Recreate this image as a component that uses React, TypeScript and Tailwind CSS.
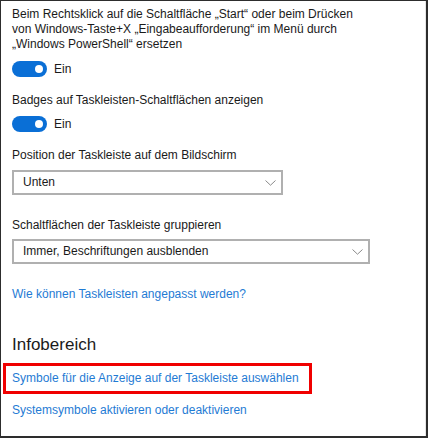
import React from 'react';

const font = { fontFamily: '"Liberation Sans", Arial, sans-serif' };

const Toggle: React.FC<{ label: string; className?: string }> = ({ label, className = '' }) => (
  <div className={`flex items-center h-[16px] ${className}`}>
    <div className="w-[35px] h-[16px] rounded-full bg-[#0a6fd6] flex items-center justify-end pr-[4px]">
      <div className="w-[8px] h-[8px] rounded-full bg-white" />
    </div>
    <span className="ml-[7px] text-[12px] leading-[15px] text-[#1a1a1a]">{label}</span>
  </div>
);

const Select: React.FC<{ value: string; width: string; className?: string }> = ({ value, width, className = '' }) => (
  <div className={`${width} h-[25px] border-2 border-[#b0b0b0] flex items-center justify-between pl-[9px] pr-[5px] ${className}`}>
    <span className="text-[12px] leading-[15px] text-[#1a1a1a]">{value}</span>
    <svg width="11" height="6" viewBox="0 0 11 6" className="shrink-0">
      <path d="M0.5 0.5 L5.5 5.2 L10.5 0.5" fill="none" stroke="#8a8a8a" strokeWidth="1" />
    </svg>
  </div>
);

export default function App() {
  return (
    <div
      className="w-[428px] h-[438px] bg-white border-t border-l border-r-2 border-b-2 border-[#2d2d2d] overflow-hidden"
      style={font}
    >
      <div className="h-full border-r border-[#e6e6e6] pl-[11px] pt-[6px] flex flex-col items-start">
        <p className="text-[12px] leading-[15px] text-[#1a1a1a] w-[360px]">
          Beim Rechtsklick auf die Schaltfläche „Start“ oder beim Drücken von Windows-Taste+X „Eingabeaufforderung“ im Menü durch „Windows PowerShell“ ersetzen
        </p>
        <Toggle label="Ein" className="mt-[9px]" />

        <p className="mt-[16px] text-[12px] leading-[15px] text-[#1a1a1a]">Badges auf Taskleisten-Schaltflächen anzeigen</p>
        <Toggle label="Ein" className="mt-[8px]" />

        <p className="mt-[16px] text-[12px] leading-[15px] text-[#1a1a1a]">Position der Taskleiste auf dem Bildschirm</p>
        <Select value="Unten" width="w-[271px]" className="mt-[7px]" />

        <p className="mt-[23px] text-[12px] leading-[15px] text-[#1a1a1a]">Schaltflächen der Taskleiste gruppieren</p>
        <Select value="Immer, Beschriftungen ausblenden" width="w-[358px]" className="mt-[6px]" />

        <a className="mt-[23px] text-[12px] leading-[15px] text-[#1f7bd4]">Wie können Taskleisten angepasst werden?</a>

        <h2 className="mt-[33px] text-[17px] leading-[20px] text-[#1a1a1a]">Infobereich</h2>

        <div className="mt-[8px] -ml-[9px] w-[309px] h-[31px] border-[3px] border-[#f00000] flex items-center pl-[6px]">
          <a className="text-[12px] leading-[15px] text-[#1f7bd4] whitespace-nowrap">Symbole für die Anzeige auf der Taskleiste auswählen</a>
        </div>

        <a className="mt-[9px] text-[12px] leading-[15px] text-[#1f7bd4]">Systemsymbole aktivieren oder deaktivieren</a>
      </div>
    </div>
  );
}
